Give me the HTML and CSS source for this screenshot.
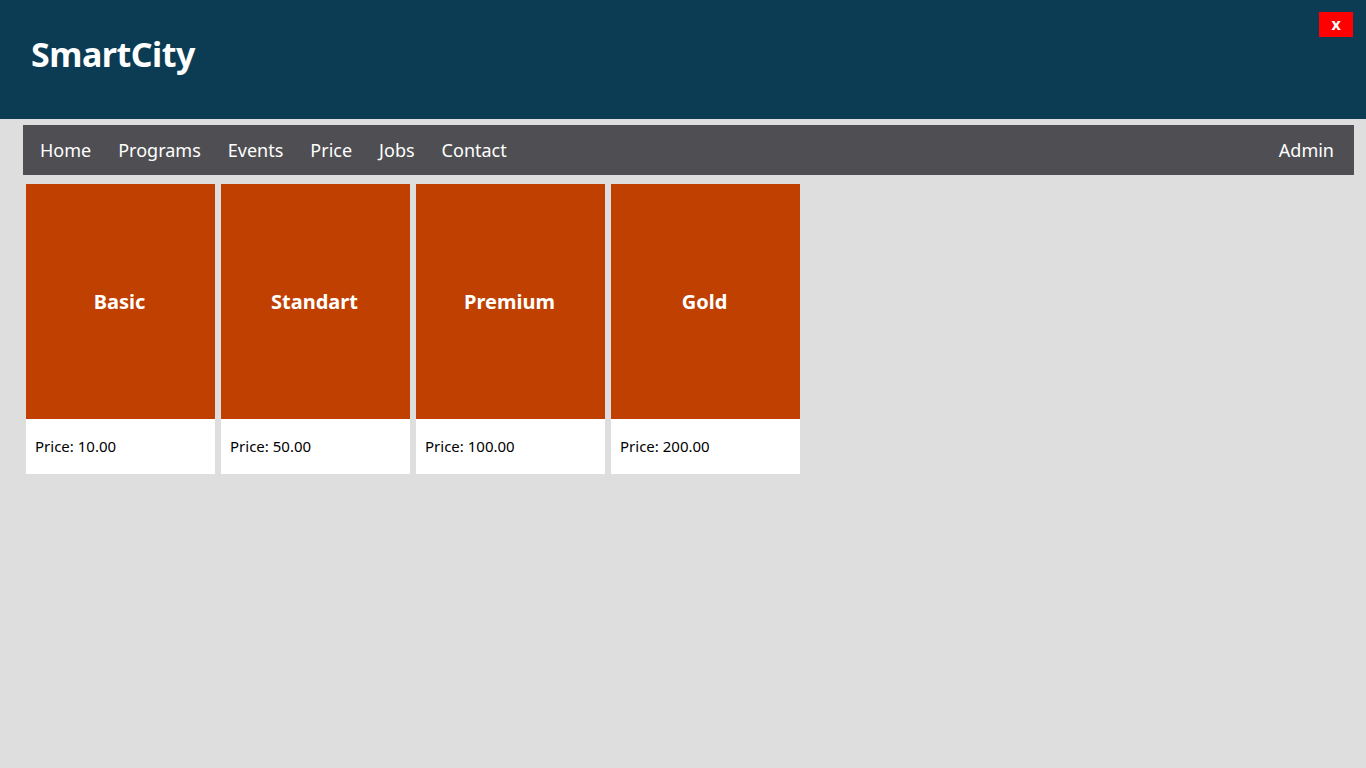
FILE: index.html
```html
<!DOCTYPE html>
<html lang="en">
<head>
<meta charset="utf-8">
<title>SmartCity</title>
<link rel="stylesheet" href="styles.css">
</head>
<body>
<header class="site-header">
  <h1 class="brand">SmartCity</h1>
  <button class="close-btn">x</button>
</header>
<nav class="main-nav">
  <ul class="nav-list">
    <li><a href="#">Home</a></li>
    <li><a href="#">Programs</a></li>
    <li><a href="#">Events</a></li>
    <li><a href="#">Price</a></li>
    <li><a href="#">Jobs</a></li>
    <li><a href="#">Contact</a></li>
  </ul>
  <a class="nav-admin" href="#">Admin</a>
</nav>
<main class="plans">
  <div class="plan">
    <div class="plan-title">Basic</div>
    <div class="plan-price">Price: 10.00</div>
  </div>
  <div class="plan">
    <div class="plan-title">Standart</div>
    <div class="plan-price">Price: 50.00</div>
  </div>
  <div class="plan">
    <div class="plan-title">Premium</div>
    <div class="plan-price">Price: 100.00</div>
  </div>
  <div class="plan">
    <div class="plan-title">Gold</div>
    <div class="plan-price">Price: 200.00</div>
  </div>
</main>
</body>
</html>
```

FILE: styles.css
```css
* { box-sizing: border-box; }

html, body {
  margin: 0;
  padding: 0;
  background: #dedede;
  font-family: "Noto Sans", "Open Sans", sans-serif;
  height: 100%;
}

.site-header {
  position: relative;
  height: 119px;
  background: #0b3c53;
  display: flex;
  align-items: center;
  padding-left: 31px;
}

.brand {
  margin: 0 0 12px 0;
  color: #ffffff;
  font-size: 34px;
  font-weight: 700;
  letter-spacing: -0.5px;
}

.close-btn {
  position: absolute;
  top: 12px;
  right: 13px;
  width: 34px;
  height: 25px;
  border: none;
  background: #ff0000;
  color: #ffffff;
  font-family: "Noto Sans", sans-serif;
  font-weight: 700;
  font-size: 16px;
  line-height: 23px;
  padding: 0;
}

.main-nav {
  margin: 6px 12px 0 23px;
  height: 50px;
  background: #4f4f53;
  display: flex;
  align-items: center;
  justify-content: space-between;
  padding: 0 20px 0 17px;
}

.nav-list {
  list-style: none;
  margin: 0;
  padding: 0;
  display: flex;
  gap: 27px;
}

.main-nav a {
  color: #ffffff;
  text-decoration: none;
  font-size: 18px;
}

.plans {
  display: flex;
  gap: 6px;
  padding: 9px 0 0 26px;
}

.plan {
  width: 189px;
  display: flex;
  flex-direction: column;
}

.plan-title {
  height: 235px;
  background: #bf4000;
  color: #ffffff;
  font-weight: 700;
  font-size: 20px;
  display: flex;
  align-items: center;
  justify-content: center;
  padding-right: 2px;
}

.plan-price {
  height: 55px;
  background: #ffffff;
  color: #000000;
  font-size: 15px;
  display: flex;
  align-items: center;
  padding: 0 0 2px 9px;
}
```
